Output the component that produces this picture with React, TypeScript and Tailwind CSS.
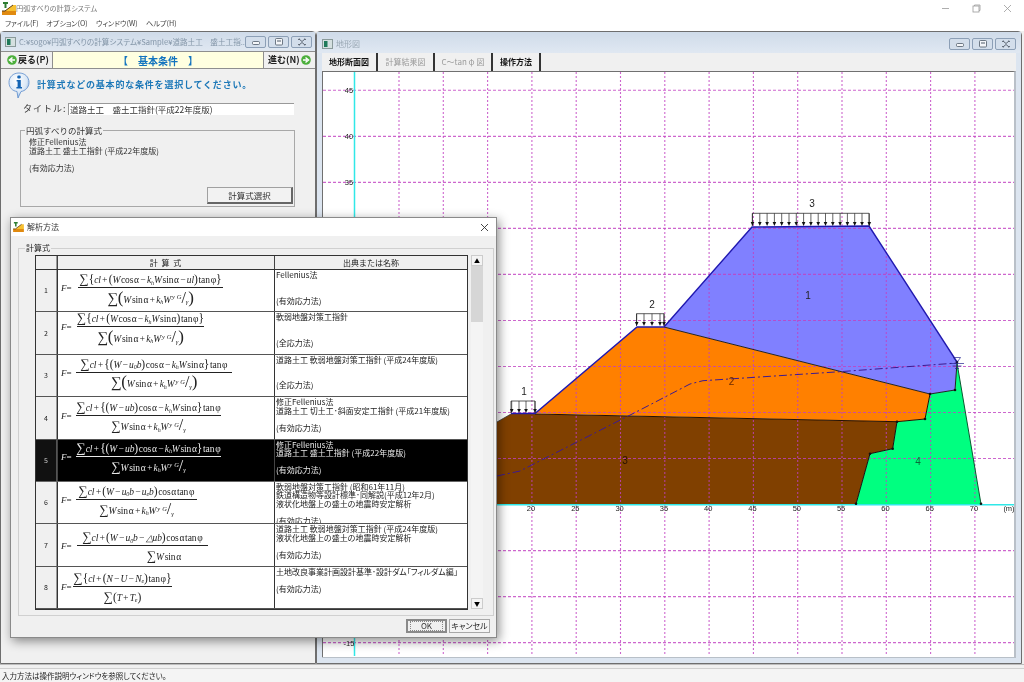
import type { ReactNode } from "react";

const palt = "[font-feature-settings:'palt']";

function AppIcon({ size = 14 }: { size?: number }) {
  return (
    <svg width={size} height={size - 1} viewBox="0 0 14 13" className="shrink-0">
      <rect x="0" y="9" width="14" height="4" fill="#e08a10" />
      <path d="M3 9 L11 3 L14 3 L14 9 Z" fill="#f7c030" />
      <path d="M0 9 L3 9 L11 3" stroke="#5a3a10" strokeWidth="1" fill="none" />
      <path d="M1 1 H6 M3.5 1 V6" stroke="#2e7d32" strokeWidth="2" />
    </svg>
  );
}

function ChildIcon() {
  return (
    <svg width="11" height="10" viewBox="0 0 11 10" className="shrink-0">
      <rect x="0.5" y="0.5" width="10" height="9" fill="#d5e0e0" stroke="#8a9a9a" />
      <rect x="2" y="2" width="3.5" height="6" fill="#1f7a5a" />
    </svg>
  );
}

function GoIcon({ flip = false }: { flip?: boolean }) {
  return (
    <svg width="10" height="10" viewBox="0 0 10 10" className="shrink-0">
      <circle cx="5" cy="5" r="4.8" fill="#4caf3c" />
      <path
        d={flip ? "M2 5 H6 M4.5 2.5 L7.5 5 L4.5 7.5" : "M8 5 H4 M5.5 2.5 L2.5 5 L5.5 7.5"}
        stroke="#fff"
        strokeWidth="1.5"
        fill="none"
      />
    </svg>
  );
}

function InfoIcon() {
  return (
    <svg width="22" height="27" viewBox="0 0 22 27" className="shrink-0">
      <defs>
        <radialGradient id="ib" cx="0.4" cy="0.3" r="0.8">
          <stop offset="0" stopColor="#ffffff" />
          <stop offset="0.6" stopColor="#dbe8f6" />
          <stop offset="1" stopColor="#6f9fd8" />
        </radialGradient>
      </defs>
      <path
        d="M11 1 C17 1 21 5 21 10.5 C21 15.5 17 19 13 19.5 L10 26 L9 19.5 C4.5 19 1 15.5 1 10.5 C1 5 5 1 11 1 Z"
        fill="url(#ib)"
        stroke="#5b8ccb"
        strokeWidth="0.8"
      />
      <rect x="9.3" y="3.4" width="3.4" height="3" rx="1.2" fill="#1464b4" />
      <path d="M8.6 8 H12.8 V15 H14 V16.6 H8.4 V15 H9.6 V9.6 H8.6 Z" fill="#1464b4" />
    </svg>
  );
}

function ChildButton({ kind }: { kind: "min" | "max" | "close" }) {
  return (
    <div className="w-[21px] h-[12px] flex items-center justify-center rounded-[2px] border border-[#8c9fb6] bg-[#d3deeb]">
      <svg width="10" height="8" viewBox="0 0 10 8">
        {kind === "min" && <rect x="1.5" y="3.5" width="7" height="3" rx="1" fill="#f4f6f9" stroke="#4f5a68" strokeWidth="0.8" />}
        {kind === "max" && (
          <>
            <rect x="1.5" y="0.5" width="7" height="6.5" rx="1" fill="#f4f6f9" stroke="#4f5a68" strokeWidth="0.8" />
            <rect x="3" y="2.5" width="4" height="1" fill="#4f5a68" />
          </>
        )}
        {kind === "close" && (
          <path d="M2 1 L5 3.5 L8 1 M2 7 L5 4.5 L8 7 M1 1.5 L3 1 M7 1 L9 1.5 M1 6.5 L3 7 M7 7 L9 6.5" stroke="#5b6572" strokeWidth="1" fill="none" />
        )}
      </svg>
    </div>
  );
}

function Sum({ big = false }: { big?: boolean }) {
  return <span className={big ? "not-italic text-[15px] leading-none" : "not-italic text-[13px] leading-none"}>∑</span>;
}
function P({ c, big = false }: { c: string; big?: boolean }) {
  return <span className={big ? "not-italic font-light text-[17px] leading-none" : "not-italic font-light text-[11.5px] leading-none"}>{c}</span>;
}
function R({ children }: { children: ReactNode }) {
  return <span className="not-italic">{children}</span>;
}
function Sb({ children }: { children: ReactNode }) {
  return <sub className="text-[6px] leading-none">{children}</sub>;
}
function KW() {
  return (
    <>
      k<Sb>h</Sb>W
    </>
  );
}
function GR() {
  return (
    <>
      <sup className="text-[6.5px] leading-none mx-[1px]">y</sup>
      <sup className="text-[6.5px] leading-none ml-[1px]">G</sup>
      <span className="not-italic font-light text-[16px] leading-none">/</span>
      <sub className="text-[6.5px] leading-none">γ</sub>
    </>
  );
}

type Row = {
  n: number;
  pt: string;
  label: string;
  frac: string;
  num: ReactNode;
  den: ReactNode;
  cite: string;
};

const sinDen = (
  <>
    <Sum big />
    <P c="(" big />
    W <R>sin α</R> + <KW />
    <GR />
    <P c=")" big />
  </>
);
const sinDen2 = (
  <>
    <Sum />
    W <R>sin α</R> + <KW />
    <GR />
  </>
);

const rows: Row[] = [
  {
    n: 1,
    pt: "pt-[4px]",
    label: "w-[17px]",
    frac: "w-[145px]",
    num: (
      <>
        <Sum />
        <P c="{" />
        cl + <P c="(" />W <R>cos α</R> − <KW /> <R>sin α</R> − ul<P c=")" /> <R>tan φ</R>
        <P c="}" />
      </>
    ),
    den: sinDen,
    cite: "Fellenius法\n\n\n(有効応力法)",
  },
  {
    n: 2,
    pt: "pt-[1px]",
    label: "w-[16px]",
    frac: "w-[127px]",
    num: (
      <>
        <Sum />
        <P c="{" />
        cl + <P c="(" />W <R>cos α</R> − <KW /> <R>sin α</R>
        <P c=")" /> <R>tan φ</R>
        <P c="}" />
      </>
    ),
    den: sinDen,
    cite: "軟弱地盤対策工指針\n\n\n(全応力法)",
  },
  {
    n: 3,
    pt: "pt-[4px]",
    label: "w-[15px]",
    frac: "w-[156px]",
    num: (
      <>
        <Sum />
        cl + <P c="{" />
        <P c="(" />W − u<Sb>0</Sb>b<P c=")" /> <R>cos α</R> − <KW /> <R>sin α</R>
        <P c="}" /> <R>tan φ</R>
      </>
    ),
    den: sinDen,
    cite: "道路土工 軟弱地盤対策工指針 (平成24年度版)\n\n\n(全応力法)",
  },
  {
    n: 4,
    pt: "pt-[5px]",
    label: "w-[15px]",
    frac: "w-[145px]",
    num: (
      <>
        <Sum />
        cl + <P c="{" />
        <P c="(" />W − ub<P c=")" /> <R>cos α</R> − <KW /> <R>sin α</R>
        <P c="}" /> <R>tan φ</R>
      </>
    ),
    den: sinDen2,
    cite: "修正Fellenius法\n道路土工 切土工･斜面安定工指針 (平成21年度版)\n\n(有効応力法)",
  },
  {
    n: 5,
    pt: "pt-[3px]",
    label: "w-[15px]",
    frac: "w-[145px]",
    num: (
      <>
        <Sum />
        cl + <P c="{" />
        <P c="(" />W − ub<P c=")" /> <R>cos α</R> − <KW /> <R>sin α</R>
        <P c="}" /> <R>tan φ</R>
      </>
    ),
    den: sinDen2,
    cite: "修正Fellenius法\n道路土工 盛土工指針 (平成22年度版)\n\n(有効応力法)",
  },
  {
    n: 6,
    pt: "pt-[4px]",
    label: "w-[15px]",
    frac: "w-[121px]",
    num: (
      <>
        <Sum />
        cl + <P c="(" />W − u<Sb>0</Sb>b − u<Sb>e</Sb>b<P c=")" /> <R>cos α tan φ</R>
      </>
    ),
    den: sinDen2,
    cite: "軟弱地盤対策工指針 (昭和61年11月)\n鉄道構造物等設計標準･同解説(平成12年2月)\n液状化地盤上の盛土の地震時安定解析\n\n(有効応力法)",
  },
  {
    n: 7,
    pt: "pt-[8px]",
    label: "w-[16px]",
    frac: "w-[131px]",
    num: (
      <>
        <Sum />
        cl + <P c="(" />W − u<Sb>0</Sb>b − △ub<P c=")" /> <R>cos α tan φ</R>
      </>
    ),
    den: (
      <span className="self-start ml-[43px]">
        <Sum />
        W <R>sin α</R>
      </span>
    ),
    cite: "道路土工 軟弱地盤対策工指針 (平成24年度版)\n液状化地盤上の盛土の地震時安定解析\n\n(有効応力法)",
  },
  {
    n: 8,
    pt: "pt-[6px]",
    label: "w-[12px]",
    frac: "w-[99px]",
    num: (
      <>
        <Sum />
        <P c="{" />
        cl + <P c="(" />N − U − N<Sb>e</Sb>
        <P c=")" /> <R>tan φ</R>
        <P c="}" />
      </>
    ),
    den: (
      <>
        <Sum />
        <P c="(" />T + T<Sb>e</Sb>
        <P c=")" />
      </>
    ),
    cite: "土地改良事業計画設計基準･設計ダム「フィルダム編」\n\n(有効応力法)",
  },
];

function MethodDialog() {
  return (
    <div className="absolute left-[10px] top-[217px] w-[487px] h-[421px] flex flex-col bg-[#f0f0f0] border border-[#8a8a8a] shadow-[2px_3px_10px_rgba(0,0,0,0.45)]">
      <div className="h-[18px] bg-white flex items-center pl-[2px] pr-[7px] gap-[3px] text-[8px] text-[#333]">
        <AppIcon size={11} />
        <span className="flex-1">解析方法</span>
        <svg width="9" height="9" viewBox="0 0 9 9">
          <path d="M1 1 L8 8 M8 1 L1 8" stroke="#333" strokeWidth="0.9" />
        </svg>
      </div>
      <div className="relative mx-[7px] mt-[12px] h-[368px] w-[476px] border border-[#d0d0d0] flex items-start pl-[16px] pt-[6px]">
        <span className="absolute left-[6px] -top-[6px] bg-[#f0f0f0] px-[1px] text-[8px] leading-[10px] text-[#222]">計算式</span>
        <div className="w-[433px] flex flex-col border border-[#333] bg-white text-[#222]">
          <div className="h-[14px] flex bg-[#f0f0f0] border-b-[1.5px] border-[#333] text-[8px] leading-[13px]">
            <div className="w-[21px] border-r border-[#999]" />
            <div className="w-[218px] border-l border-r border-[#444] text-center tracking-[1px]">計 算 式</div>
            <div className="flex-1 text-center">出典または名称</div>
          </div>
          {rows.map((row) => {
            const selected = row.n === 5;
            return (
              <div
                key={row.n}
                className={
                  selected
                    ? "h-[42.4px] flex overflow-hidden bg-black text-[#e8e8e8] border-b border-[#666]"
                    : "h-[42.4px] flex overflow-hidden bg-white border-b border-[#555]"
                }
              >
                <div
                  className={
                    selected
                      ? "w-[21px] shrink-0 flex items-center justify-center bg-[#111] text-[7px] text-[#ccc] border-r border-[#555]"
                      : "w-[21px] shrink-0 flex items-center justify-center bg-[#f0f0f0] text-[7px] border-r border-[#999]"
                  }
                >
                  {row.n}
                </div>
                <div
                  className={`w-[218px] shrink-0 flex items-start pl-[3px] border-l border-r ${selected ? "border-[#444]" : "border-[#333]"} ${row.pt} font-['Liberation_Serif',serif] italic text-[9.5px] tracking-[-0.1px] [word-spacing:-1.5px] whitespace-nowrap`}
                >
                  <div className={`${row.label} shrink-0 mt-[8px] leading-[12px] text-[9px]`}>
                    F<span className="not-italic">=</span>
                  </div>
                  <div className={`${row.frac} shrink-0 flex flex-col items-center`}>
                    <div className={`h-[14px] self-stretch flex items-end justify-center leading-[14px] border-b ${selected ? "border-[#e8e8e8]" : "border-[#222]"}`}>
                      <span>{row.num}</span>
                    </div>
                    <div className="h-[22px] self-stretch flex items-center justify-center leading-[20px]">
                      <span>{row.den}</span>
                    </div>
                  </div>
                </div>
                <div className={`flex-1 pl-[1px] pt-[1px] whitespace-pre text-[8px] leading-[8.5px] ${palt}`}>{row.cite}</div>
              </div>
            );
          })}
        </div>
        <div className="ml-[3px] w-[12px] h-[354px] flex flex-col bg-[#f4f4f4]">
          <div className="h-[11px] flex items-center justify-center border border-[#ccc] text-[6px] leading-none">▲</div>
          <div className="h-[56px] bg-[#d6d6d6]" />
          <div className="flex-1" />
          <div className="h-[11px] flex items-center justify-center border border-[#ccc] text-[6px] leading-none">▼</div>
        </div>
      </div>
      <div className="flex justify-end gap-[2px] pr-[6px] pt-[3px]">
        <div className="w-[41px] h-[14px] flex items-center justify-center border-2 border-[#8a8a8a] bg-[#f0f0f0] text-[8px] text-[#333]">
          <span className="w-[33px] border border-dotted border-[#888] text-center leading-[8px]">OK</span>
        </div>
        <div className={`w-[41px] h-[14px] flex items-center justify-center border border-[#a8a8a8] bg-[#f4f4f4] text-[8px] text-[#222] ${palt}`}>キャンセル</div>
      </div>
    </div>
  );
}

const gridX = Array.from({ length: 14 }, (_, i) => 399 + i * 44.3);
const gridY = Array.from({ length: 13 }, (_, i) => 90.3 + i * 46.03);
const loadX3 = Array.from({ length: 17 }, (_, i) => 752.5 + i * 7.3);

function Load({ xs, x1, x2, top, bottom }: { xs: number[]; x1: number; x2: number; top: number; bottom: number }) {
  return (
    <g>
      <path d={`M${x1} ${bottom} V${top} H${x2} V${bottom}`} fill="none" stroke="#333" strokeWidth="0.8" />
      {xs.map((x) => (
        <g key={x}>
          <line x1={x} y1={top} x2={x} y2={bottom - 3} stroke="#222" strokeWidth="0.7" />
          <path d={`M${x - 1.8} ${bottom - 4} H${x + 1.8} L${x} ${bottom} Z`} fill="#111" />
        </g>
      ))}
    </g>
  );
}

function SlopeChart() {
  const dots: [number, number][] = [
    [930, 394],
    [955, 390],
    [925, 419],
    [897, 421.7],
    [892.7, 448.7],
    [870, 453.7],
    [856, 503.7],
    [981, 503.7],
    [957, 362],
  ];
  return (
    <svg viewBox="323 72 691 585" className="w-[691px] h-[585px] block bg-white">
      <polygon points="664,327 752,227 869,226 957,363 955,390 930,394" fill="#8080ff" />
      <polygon points="535,413.5 637,327 664,327 930,394 925,419 897,421.7" fill="#ff8000" />
      <polygon points="323,504 323,430 497,422 511,414 535,414 897,421.7 892.7,448.7 870,453.7 856,504" fill="#804000" />
      <polygon points="957,363 955,390 930,394 925,419 897,421.7 892.7,448.7 870,453.7 856,504 981,504" fill="#00ff80" />
      {gridX.map((x) => (
        <line key={x} x1={x} y1="72" x2={x} y2="656" stroke="#c040c0" strokeOpacity="0.8" strokeWidth="1.1" strokeDasharray="2 2" />
      ))}
      {gridY.map((y) => (
        <line key={y} x1="323" y1={y} x2="1014" y2={y} stroke="#c040c0" strokeOpacity="0.8" strokeWidth="1.1" strokeDasharray="3 2" />
      ))}
      <line x1="354.5" y1="72" x2="354.5" y2="656" stroke="#30e8e8" strokeWidth="1.5" />
      <line x1="355" y1="504.8" x2="1014" y2="504.8" stroke="#30e8e8" strokeWidth="1.5" />
      <path d="M664 327 L930 394 L955 390 L957 363" fill="none" stroke="#222" strokeWidth="1" />
      <path d="M535 414 L897 421.7 L925 419 L930 394" fill="none" stroke="#241000" strokeWidth="1" />
      <path d="M897 421.7 L892.7 448.7 L870 453.7 L856 504" fill="none" stroke="#111" strokeWidth="1" />
      <path d="M957 363 L981 504" fill="none" stroke="#0a5a30" strokeWidth="1" />
      <path d="M497 422 L511 414" fill="none" stroke="#333" strokeWidth="0.8" />
      <path d="M511 413.5 L535 413.5 L637 327 L664 327 L752 227 L869 226 L957 362" fill="none" stroke="#2018b0" strokeWidth="1.4" />
      <path
        d="M497 476 L520 471 L640 410 L690 384 L703 380.7 L790 375 L840 371.7 L957 363"
        fill="none"
        stroke="#3c1a90"
        strokeWidth="1"
        strokeDasharray="8 3 2 3"
      />
      {dots.map(([x, y]) => (
        <circle key={x} cx={x} cy={y} r="1.3" fill="#111" />
      ))}
      <Load xs={[511.7, 519, 526, 535]} x1={511} x2={535} top={401} bottom={413} />
      <Load xs={[636.7, 644, 652, 660, 664]} x1={636.5} x2={664} top={313.7} bottom={326} />
      <Load xs={loadX3} x1={752.3} x2={869} top={213.3} bottom={226} />
      <path d="M953.5 357.5 H960.5 L957 362.5 Z M950 363.5 H964 M952.5 366 H961.5 M955 368.5 H959" fill="none" stroke="#23238f" strokeWidth="0.7" />
      <g fontFamily="'Liberation Sans',sans-serif" fontSize="10" fill="#222" textAnchor="middle">
        <text x="524" y="395">1</text>
        <text x="652" y="307.5">2</text>
        <text x="812" y="206.5">3</text>
        <text x="808" y="299">1</text>
        <text x="731.5" y="385" fill="#6a2800">2</text>
        <text x="625" y="463.5" fill="#2a1000">3</text>
        <text x="918" y="465" fill="#0a6a3a">4</text>
      </g>
      <g fontFamily="'Liberation Sans',sans-serif" fontSize="7.5" fill="#222" textAnchor="middle">
        <text x="349" y="93">45</text>
        <text x="349" y="139">40</text>
        <text x="349" y="185">35</text>
        <text x="349" y="646">-15</text>
        {[20, 25, 30, 35, 40, 45, 50, 55, 60, 65, 70].map((v, i) => (
          <text key={v} x={531 + i * 44.3} y="511">
            {v}
          </text>
        ))}
        <text x="1009" y="511">(m)</text>
      </g>
    </svg>
  );
}

export default function App() {
  return (
    <div className="w-[1024px] h-[682px] relative overflow-hidden flex flex-col bg-[#f0f0f0] font-['Noto_Sans_CJK_JP',sans-serif] blur-[0.35px]">
      <div className="h-[31px] shrink-0 bg-white flex flex-col">
        <div className="h-[16px] flex items-center pl-[2px] pr-[12px]">
          <AppIcon />
          <span className={`text-[7.2px] text-[#777] whitespace-nowrap ${palt}`}>円弧すべりの計算システム</span>
          <div className="ml-auto flex items-center gap-[22px]">
            <svg width="9" height="9" viewBox="0 0 9 9">
              <path d="M1 4.5 H8" stroke="#999" strokeWidth="0.8" />
            </svg>
            <svg width="9" height="9" viewBox="0 0 9 9">
              <rect x="1" y="2" width="6" height="6" fill="none" stroke="#999" strokeWidth="0.8" />
              <path d="M2.5 2 V1 H8 V6.5 H7" fill="none" stroke="#999" strokeWidth="0.8" />
            </svg>
            <svg width="9" height="9" viewBox="0 0 9 9">
              <path d="M1 1 L8 8 M8 1 L1 8" stroke="#999" strokeWidth="0.8" />
            </svg>
          </div>
        </div>
        <div className={`h-[15px] flex items-center pl-[5px] gap-[10px] text-[7.2px] text-[#444] whitespace-nowrap ${palt}`}>
          <span className="w-[31px]">ファイル(F)</span>
          <span className="w-[40px]">オプション(O)</span>
          <span className="w-[40px]">ウィンドウ(W)</span>
          <span>ヘルプ(H)</span>
        </div>
      </div>

      <div className="h-[633px] shrink-0 flex">
        {/* 左: 基本条件ウィンドウ */}
        <div className="w-[316px] shrink-0 flex flex-col rounded-t-[4px] border border-[#6e6e6e] bg-[#f0f0f0]">
          <div className="h-[19px] shrink-0 flex items-center pl-[4px] pr-[3px] bg-gradient-to-b from-[#cfdbe9] to-[#e0e8f2]">
            <ChildIcon />
            <span className={`ml-[3px] flex-1 min-w-0 text-[7.6px] text-[#8496a8] whitespace-nowrap overflow-hidden ${palt}`}>C:¥sogo¥円弧すべりの計算システム¥Sample¥道路土工　盛土工指...</span>
            <div className="flex gap-[2px] shrink-0">
              <ChildButton kind="min" />
              <ChildButton kind="max" />
              <ChildButton kind="close" />
            </div>
          </div>
          <div className="h-[18px] shrink-0 flex items-center pl-[3px] pr-[2px] gap-[2px] border-y border-[#8e8e8e] bg-[#f0f0f0]">
            <div className="w-[46px] h-full flex items-center gap-[1px] pl-[3px] text-[9px] font-bold text-[#222] whitespace-nowrap">
              <GoIcon />
              戻る(P)
            </div>
            <div className="flex-1 h-full flex items-center justify-center border-x border-[#8e8e8e] bg-[#ffffe0] text-[10px] font-bold text-[#1273bf] whitespace-pre">【　基本条件　】</div>
            <div className="w-[47px] h-full flex items-center gap-[1px] pl-[2px] text-[9px] font-bold text-[#222] whitespace-nowrap">
              進む(N)
              <GoIcon flip />
            </div>
          </div>
          <div className="pl-[7px] flex items-center gap-[7px] h-[33px] shrink-0">
            <InfoIcon />
            <span className="text-[9px] font-bold tracking-[0.8px] text-[#1d78b8] -mt-[1px]">計算式などの基本的な条件を選択してください。</span>
          </div>
          <div className="pl-[22px] flex items-center h-[14px] shrink-0 text-[9px] text-[#333]">
            <span className="w-[45px] tracking-[1px]">タイトル:</span>
            <div className="w-[226px] h-[12px] bg-white border-t border-l border-[#999] text-[8.5px] leading-[11px] pl-[1px]">道路土工　盛土工指針(平成22年度版)</div>
          </div>
          <div className="relative ml-[19px] mt-[14px] w-[275px] h-[77px] shrink-0 border border-[#a8a8a8] flex flex-col pl-[8px] pt-[7px] text-[#333]">
            <span className="absolute left-[4px] -top-[6px] bg-[#f0f0f0] px-[1px] text-[8.5px] leading-[10px]">円弧すべりの計算式</span>
            <div className="whitespace-pre-line text-[8px] leading-[8.8px]">{"修正Fellenius法\n道路土工 盛土工指針 (平成22年度版)\n\n(有効応力法)"}</div>
            <div className="mt-auto mb-[2px] mr-[1px] self-end w-[86px] h-[17px] flex items-center justify-center border border-[#a0a0a0] border-b-2 border-r-2 border-b-[#666] border-r-[#666] bg-[#f2f2f2] text-[8.5px]">計算式選択</div>
          </div>
        </div>

        {/* 右: 地形図ウィンドウ */}
        <div className="w-[706px] shrink-0 flex flex-col rounded-t-[4px] border border-[#6e6e6e] bg-[#dce5f0] px-[5px]">
          <div className="h-[21px] shrink-0 flex items-center pt-[3px] bg-gradient-to-b from-[#cfdbe9] to-[#e0e8f2] -mx-[5px] pl-[5px] pr-[5px]">
            <ChildIcon />
            <span className="ml-[3px] flex-1 text-[8px] text-[#9aa8b4]">地形図</span>
            <div className="flex gap-[2px]">
              <ChildButton kind="min" />
              <ChildButton kind="max" />
              <ChildButton kind="close" />
            </div>
          </div>
          <div className="h-[18px] shrink-0 flex items-center bg-[#f0f0f0] text-[8px] leading-[17px]">
            <div className="w-[56px] h-full text-center font-bold text-[#111] border-r-2 border-[#333]">地形断面図</div>
            <div className="w-[57px] h-full text-center text-[#9a9a9a] border-r-2 border-[#333]">計算結果図</div>
            <div className="w-[58px] h-full text-center text-[#9a9a9a] border-r-2 border-[#333]">C〜tan φ 図</div>
            <div className="w-[48px] h-full text-center font-bold text-[#111] border-r-2 border-[#333]">操作方法</div>
          </div>
          <div className="shrink-0 border-t border-l border-[#707070] border-r-[3px] border-r-[#b9c0c8]">
            <SlopeChart />
          </div>
          <div className="flex-1 border-t border-[#b8c0c8]" />
        </div>
      </div>

      <div className="flex-1 flex flex-col border-t border-[#bdbdbd]">
        <div className="mt-[3px] flex-1 pl-[2px] text-[7.5px] leading-[13px] text-[#222] border-t border-[#d0d0d0] bg-[#f4f4f4] whitespace-nowrap">
          <span className={palt}>入力方法は操作説明ウィンドウを参照してください。</span>
        </div>
      </div>

      <MethodDialog />
    </div>
  );
}
